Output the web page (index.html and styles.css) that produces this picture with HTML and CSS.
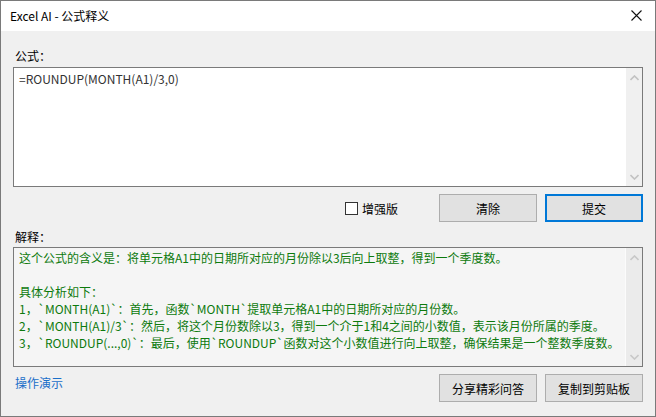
FILE: index.html
```html
<!DOCTYPE html>
<html lang="zh-CN">
<head>
<meta charset="utf-8">
<title>Excel AI - 公式释义</title>
<link rel="stylesheet" href="styles.css">
</head>
<body>
<div class="window">
  <div class="titlebar">
    <span class="title">Excel AI - 公式释义</span>
    <svg class="close" width="11" height="11" viewBox="0 0 11 11"><path d="M0.5 0.5 L10.5 10.5 M10.5 0.5 L0.5 10.5" stroke="#111" stroke-width="1.1" fill="none"/></svg>
  </div>
  <div class="content">
    <div class="label label-formula">公式：</div>
    <div class="box box-formula">
      <div class="box-text formula-text">=ROUNDUP(MONTH(A1)/3,0)</div>
      <div class="vscroll">
        <svg class="arrow" width="9" height="6" viewBox="0 0 9 6"><path d="M0.5 5 L4.5 1 L8.5 5" stroke="#c2c2c2" stroke-width="1.6" fill="none"/></svg>
        <svg class="arrow" width="9" height="6" viewBox="0 0 9 6"><path d="M0.5 1 L4.5 5 L8.5 1" stroke="#c2c2c2" stroke-width="1.6" fill="none"/></svg>
      </div>
    </div>
    <div class="row row-actions">
      <label class="check"><span class="checkbox"></span><span>增强版</span></label>
      <div class="btn">清除</div>
      <div class="btn btn-default">提交</div>
    </div>
    <div class="label label-explain">解释：</div>
    <div class="box box-explain">
      <div class="box-text explain-text">这个公式的含义是：将单元格A1中的日期所对应的月份除以3后向上取整，得到一个季度数。

具体分析如下：
1，`MONTH(A1)`：首先，函数`MONTH`提取单元格A1中的日期所对应的月份数。
2，`MONTH(A1)/3`：然后，将这个月份数除以3，得到一个介于1和4之间的小数值，表示该月份所属的季度。
3，`ROUNDUP(...,0)`：最后，使用`ROUNDUP`函数对这个小数值进行向上取整，确保结果是一个整数季度数。</div>
      <div class="vscroll vscroll-explain">
        <svg class="arrow" width="9" height="6" viewBox="0 0 9 6"><path d="M0.5 5 L4.5 1 L8.5 5" stroke="#c8c8c8" stroke-width="1.6" fill="none"/></svg>
        <svg class="arrow" width="9" height="6" viewBox="0 0 9 6"><path d="M0.5 1 L4.5 5 L8.5 1" stroke="#c8c8c8" stroke-width="1.6" fill="none"/></svg>
      </div>
    </div>
    <div class="row row-bottom">
      <a class="link">操作演示</a>
      <div class="spacer"></div>
      <div class="btn">分享精彩问答</div>
      <div class="btn">复制到剪贴板</div>
    </div>
  </div>
</div>
</body>
</html>
```

FILE: styles.css
```css
* { box-sizing: border-box; }
html, body { margin: 0; padding: 0; }
body {
  font-family: "Noto Sans CJK SC", "Noto Sans", sans-serif;
  font-size: 12px;
  color: #111;
  background: #fff;
}
.window {
  width: 656px;
  height: 417px;
  border: 1px solid #7a7a7a;
  display: flex;
  flex-direction: column;
  background: #f0f0f0;
}
.titlebar {
  height: 30px;
  background: #fff;
  display: flex;
  align-items: center;
  padding: 0 9px 0 9px;
  flex: none;
}
.title {
  flex: 1;
  font-size: 12px;
  color: #000;
  line-height: 17px;
  margin-top: -1px;
}
.close {
  margin-right: 4px;
  margin-top: -1px;
}
.content {
  flex: 1;
  padding: 16px 12px 0 12px;
  display: flex;
  flex-direction: column;
}
.label {
  line-height: 17px;
  height: 17px;
  padding-left: 2px;
  color: #000;
}
.label-formula { margin-bottom: 3px; }
.label-explain { margin-bottom: 2px; }
.box {
  height: 120px;
  border: 1px solid #7a7a7a;
  display: flex;
  flex: none;
}
.box-formula { background: #fff; }
.box-explain { background: #f5f5f5; }
.box-text {
  flex: 1;
  white-space: pre-wrap;
  line-height: 17px;
}
.formula-text {
  padding: 2px 5px;
  color: #333;
}
.explain-text {
  padding: 1px 5px;
  color: #0d7a0d;
}
.vscroll {
  width: 17px;
  background: #f0f0f0;
  display: flex;
  flex-direction: column;
  justify-content: space-between;
  align-items: center;
  padding: 7px 0 6px 0;
  border-left: 1px solid #fff;
}
.vscroll-explain {
  background: #ebebeb;
  border-left: 1px solid #fbfbfb;
}
.row {
  display: flex;
  align-items: center;
  gap: 8px;
  flex: none;
}
.row-actions {
  margin-top: 7px;
  margin-bottom: 6px;
  justify-content: flex-end;
  padding-right: 0;
}
.check {
  display: flex;
  align-items: center;
  gap: 4px;
  margin-right: 33px;
  color: #000;
  line-height: 17px;
}
.checkbox {
  width: 13px;
  height: 13px;
  border: 1px solid #333;
  background: #fff;
  display: inline-block;
}
.btn {
  width: 98px;
  height: 28px;
  border: 1px solid #adadad;
  background: #e1e1e1;
  display: flex;
  align-items: center;
  justify-content: center;
  color: #000;
  line-height: 17px;
}
.btn-default {
  border: 2px solid #0078d7;
}
.row-bottom {
  margin-top: 7px;
}
.spacer { flex: 1; }
.link {
  color: #1a6fc9;
  padding-left: 2px;
  line-height: 17px;
  align-self: flex-start;
  margin-top: 0px;
}
```
